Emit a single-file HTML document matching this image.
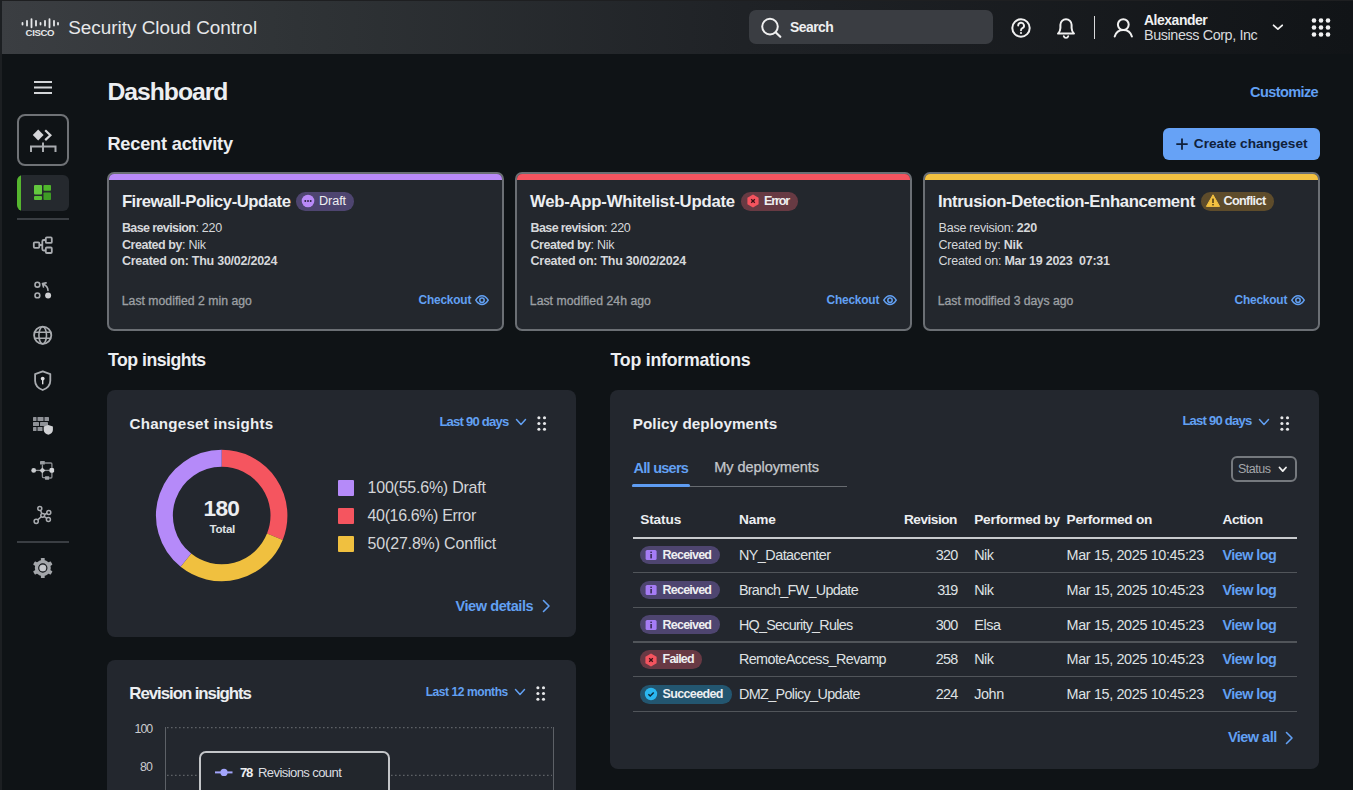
<!DOCTYPE html>
<html><head><meta charset="utf-8"><title>Security Cloud Control - Dashboard</title>
<style>
html,body{margin:0;padding:0;}
body{width:1353px;height:790px;overflow:hidden;background:#0f1316;position:relative;font-family:"Liberation Sans",sans-serif;}
.t{position:absolute;white-space:nowrap;line-height:1;}
svg{overflow:visible}
</style></head><body>
<div style="position:absolute;left:0;top:0;width:1353px;height:54px;background:linear-gradient(90deg,#3b3e42 0%,#2f3336 22%,#1f2226 55%,#111417 100%);border-top:1px solid #1e1f21;box-sizing:border-box"></div>
<div style="position:absolute;left:0;top:0;width:2px;height:790px;background:#1c1f22"></div>
<svg style="position:absolute;left:0;top:0" width="80" height="53"><rect x="21.6" y="22.0" width="1.8" height="3.4" rx="0.9" fill="#e6e7e9"/><rect x="26.1" y="20.0" width="1.8" height="6.4" rx="0.9" fill="#e6e7e9"/><rect x="30.6" y="18.2" width="1.8" height="10" rx="0.9" fill="#e6e7e9"/><rect x="35.1" y="20.0" width="1.8" height="6.4" rx="0.9" fill="#e6e7e9"/><rect x="39.6" y="22.0" width="1.8" height="3.4" rx="0.9" fill="#e6e7e9"/><rect x="44.1" y="20.0" width="1.8" height="6.4" rx="0.9" fill="#e6e7e9"/><rect x="48.6" y="18.2" width="1.8" height="10" rx="0.9" fill="#e6e7e9"/><rect x="53.1" y="20.0" width="1.8" height="6.4" rx="0.9" fill="#e6e7e9"/><rect x="57.1" y="22.0" width="1.8" height="3.4" rx="0.9" fill="#e6e7e9"/></svg>
<div class="t" style="left:25.60px;top:28.08px;font-size:9.59px;font-weight:700;color:#e6e7e9;letter-spacing:-0.350px;">CISCO</div>
<div class="t" style="left:68.20px;top:19.01px;font-size:18.90px;font-weight:400;color:#e6e7e9;letter-spacing:-0.005px;">Security Cloud Control</div>
<div style="position:absolute;left:749px;top:10px;width:244px;height:34px;border-radius:7px;background:#3a3d42"></div>
<svg style="position:absolute;left:758px;top:15px" width="26" height="26"><circle cx="12" cy="11.6" r="7.8" fill="none" stroke="#f0f0f0" stroke-width="2"/><line x1="17.6" y1="17.2" x2="22.3" y2="21.8" stroke="#f0f0f0" stroke-width="2.2" stroke-linecap="round"/></svg>
<div class="t" style="left:790.00px;top:21.19px;font-size:13.95px;font-weight:700;color:#eeeff1;letter-spacing:-0.540px;">Search</div>
<svg style="position:absolute;left:1008px;top:15px" width="26" height="26"><circle cx="13" cy="13" r="8.7" fill="none" stroke="#f0f0f0" stroke-width="2"/><path d="M10.2 10.6 a2.9 2.9 0 1 1 4.2 2.6 c-0.9 0.5 -1.4 1 -1.4 2" fill="none" stroke="#f0f0f0" stroke-width="1.9" stroke-linecap="round"/><circle cx="13" cy="18" r="1.1" fill="#f0f0f0"/></svg>
<svg style="position:absolute;left:1053px;top:14px" width="26" height="26"><path d="M5 19.6 h16 c-1.6 -1.6 -2.4 -3.3 -2.4 -5.6 v-3.2 a5.6 5.6 0 0 0 -11.2 0 v3.2 c0 2.3 -0.8 4 -2.4 5.6 z" fill="none" stroke="#f0f0f0" stroke-width="2" stroke-linejoin="round"/><path d="M10.8 22.2 a2.3 2.3 0 0 0 4.4 0" fill="none" stroke="#f0f0f0" stroke-width="1.9" stroke-linecap="round"/></svg>
<div style="position:absolute;left:1094px;top:16px;width:1.2px;height:23px;background:#d8d9db"></div>
<svg style="position:absolute;left:1110px;top:15px" width="26" height="26"><circle cx="13.3" cy="9.6" r="5.4" fill="none" stroke="#f0f0f0" stroke-width="2"/><path d="M4.7 21.5 c1.2 -4.3 4.4 -6.6 8.6 -6.6 s7.4 2.3 8.6 6.6" fill="none" stroke="#f0f0f0" stroke-width="2" stroke-linecap="round"/></svg>
<div class="t" style="left:1144.00px;top:14.19px;font-size:13.95px;font-weight:700;color:#f0f1f2;letter-spacing:-0.463px;">Alexander</div>
<div class="t" style="left:1144.00px;top:27.82px;font-size:14.39px;font-weight:400;color:#d8dadd;letter-spacing:-0.406px;">Business Corp, Inc</div>
<svg style="position:absolute;left:1270px;top:21px" width="16" height="14"><path d="M3.6 4.3 l4.3 3.8 l4.3 -3.8" fill="none" stroke="#f0f0f0" stroke-width="1.8" stroke-linecap="round" stroke-linejoin="round"/></svg>
<svg style="position:absolute;left:1308px;top:15px" width="26" height="26"><circle cx="6" cy="5.5" r="2.3" fill="#f2f2f3"/><circle cx="6" cy="12.5" r="2.3" fill="#f2f2f3"/><circle cx="6" cy="19.5" r="2.3" fill="#f2f2f3"/><circle cx="13" cy="5.5" r="2.3" fill="#f2f2f3"/><circle cx="13" cy="12.5" r="2.3" fill="#f2f2f3"/><circle cx="13" cy="19.5" r="2.3" fill="#f2f2f3"/><circle cx="20" cy="5.5" r="2.3" fill="#f2f2f3"/><circle cx="20" cy="12.5" r="2.3" fill="#f2f2f3"/><circle cx="20" cy="19.5" r="2.3" fill="#f2f2f3"/></svg>
<svg style="position:absolute;left:30px;top:78px" width="24" height="20"><rect x="4" y="3" width="18" height="2" fill="#d3d5d8"/><rect x="4" y="8.5" width="18" height="2" fill="#d3d5d8"/><rect x="4" y="14" width="18" height="2" fill="#d3d5d8"/></svg>
<div style="position:absolute;left:17px;top:114px;width:52px;height:52px;box-sizing:border-box;border:2px solid #6f7276;border-radius:8px"></div>
<svg style="position:absolute;left:0px;top:0px" width="80" height="200"><path d="M38.2 129.6 l5.4 5.4 l-5.4 5.4 l-5.4 -5.4 z" fill="#d5d6d9"/><path d="M46 131 l4.4 4.2 l-4.4 4.2" fill="none" stroke="#d5d6d9" stroke-width="2.2" stroke-linecap="square"/><path d="M31 152 v-5.5 h24.5 v5.5 M43 142.5 v9.5" fill="none" stroke="#a9acb0" stroke-width="2"/></svg>
<div style="position:absolute;left:17px;top:174.5px;width:52px;height:36px;border-radius:6px;background:#25292e;overflow:hidden"><div style="position:absolute;left:0;top:0;width:3.5px;height:36px;background:#55b52f"></div></div>
<svg style="position:absolute;left:34px;top:185px" width="18" height="16"><rect x="0" y="0" width="8" height="9.5" rx="1" fill="#63c73e"/><rect x="0" y="11" width="8" height="4" rx="1" fill="#58be35"/><rect x="9.5" y="0" width="7.5" height="5.8" rx="0.8" fill="#4fb52a"/><rect x="9.5" y="7.5" width="7.5" height="7.5" rx="0.8" fill="#3e9b25"/></svg>
<div style="position:absolute;left:17px;top:218px;width:52px;height:1.5px;background:#3a3e43"></div>
<svg style="position:absolute;left:30px;top:233px" width="26" height="24"><rect x="3.8" y="9.3" width="5.5" height="5.5" rx="1" fill="none" stroke="#a9acb0" stroke-width="1.8"/><rect x="15.8" y="4.4" width="6" height="5.5" rx="1" fill="none" stroke="#a9acb0" stroke-width="1.8"/><rect x="15.8" y="14.5" width="6" height="5.5" rx="1" fill="none" stroke="#a9acb0" stroke-width="1.8"/><path d="M9.3 12 h3 M15.8 7 h-2 a1.5 1.5 0 0 0 -1.5 1.5 v7.5 a1.5 1.5 0 0 0 1.5 1.5 h2" fill="none" stroke="#a9acb0" stroke-width="1.8"/></svg>
<svg style="position:absolute;left:30px;top:278px" width="26" height="24"><circle cx="7.4" cy="6.7" r="2.4" fill="none" stroke="#a9acb0" stroke-width="1.6"/><circle cx="7.4" cy="17.4" r="2.4" fill="none" stroke="#a9acb0" stroke-width="1.6"/><circle cx="18.1" cy="17.4" r="3" fill="#cfd0d3"/><path d="M18 12.5 c0 -3 -1.5 -5 -5 -6.5 M12.5 5.5 l1 3.5 M12.5 5.5 l3.6 -0.6" fill="none" stroke="#a9acb0" stroke-width="1.6" stroke-linecap="round"/></svg>
<svg style="position:absolute;left:30px;top:323px" width="26" height="26"><circle cx="12.7" cy="12.3" r="8.6" fill="none" stroke="#a9acb0" stroke-width="1.8"/><ellipse cx="12.7" cy="12.3" rx="3.8" ry="8.6" fill="none" stroke="#a9acb0" stroke-width="1.6"/><path d="M4.5 9.3 h16.4 M4.5 15.3 h16.4" stroke="#a9acb0" stroke-width="1.6"/></svg>
<svg style="position:absolute;left:30px;top:368px" width="26" height="26"><path d="M12.7 3.3 l7.6 2.8 v6.6 c0 4.6 -3.3 7.6 -7.6 9.3 c-4.3 -1.7 -7.6 -4.7 -7.6 -9.3 v-6.6 z" fill="none" stroke="#a9acb0" stroke-width="1.8" stroke-linejoin="round"/><circle cx="12.7" cy="10.6" r="1.9" fill="#e0e1e3"/><rect x="12" y="11" width="1.4" height="5.3" fill="#e0e1e3"/></svg>
<svg style="position:absolute;left:30px;top:413px" width="26" height="26"><g fill="#8f9297"><rect x="3" y="4" width="3.5" height="4" rx="0.6"/><rect x="7.5" y="4" width="6" height="4" rx="0.6"/><rect x="14.5" y="4" width="4.5" height="4" rx="0.6"/><rect x="3" y="9" width="6" height="4" rx="0.6"/><rect x="10" y="9" width="8" height="4" rx="0.6"/><rect x="3" y="14" width="3.5" height="4" rx="0.6"/><rect x="7.5" y="14" width="5" height="4" rx="0.6"/></g><path d="M18.3 12 l4.6 1.6 v3.3 c0 2.4 -1.9 3.8 -4.6 4.8 c-2.7 -1 -4.6 -2.4 -4.6 -4.8 v-3.3 z" fill="#d0d1d4"/></svg>
<svg style="position:absolute;left:28px;top:452px" width="30" height="30"><g fill="none" stroke="#8c8f93" stroke-width="1.3"><path d="M5.7 18.4 h18"/><path d="M14.4 12.5 v5.9 M16.9 11 h6 a1 1 0 0 1 1 1 v6.4 M14.4 18.4 v6 a1.2 1.2 0 0 0 1.2 1.2 h2 M21.3 26 h1.6 a1 1 0 0 0 1 -1 v-6.6"/></g><circle cx="5.7" cy="18.4" r="2.4" fill="#c9cbce"/><path d="M14.4 15.5 l2.9 2.9 l-2.9 2.9 l-2.9 -2.9 z" fill="#c9cbce"/><rect x="21.5" y="16.1" width="4.6" height="4.6" rx="1.4" fill="#d5d7da"/><rect x="12" y="9.1" width="4.9" height="3.5" rx="0.7" fill="#9a9da1"/><rect x="16.9" y="24.3" width="4.4" height="3.5" rx="0.7" fill="#a4a7ab"/></svg>
<svg style="position:absolute;left:30px;top:503px" width="26" height="26"><g fill="none" stroke="#a9acb0" stroke-width="1.5"><circle cx="12.7" cy="12.3" r="1.9"/><circle cx="9.8" cy="5.6" r="2"/><circle cx="18.8" cy="9.4" r="2"/><circle cx="18.4" cy="16.4" r="2"/><circle cx="6.2" cy="18.3" r="2.1"/><path d="M11.8 10.5 l-1.2 -3 M14.5 11.5 l2.5 -1.2 M14.3 13.5 l2.4 1.8 M11.2 13.7 l-3.5 3.2"/></g></svg>
<div style="position:absolute;left:17px;top:541px;width:52px;height:1.5px;background:#3a3e43"></div>
<svg style="position:absolute;left:28px;top:553px" width="30" height="30"><g fill="#a3a6aa"><circle cx="14.8" cy="15" r="8"/><rect x="12.9" y="4.9" width="3.8" height="5" rx="0.6" transform="rotate(0 14.8 15)"/><rect x="12.9" y="4.9" width="3.8" height="5" rx="0.6" transform="rotate(60 14.8 15)"/><rect x="12.9" y="4.9" width="3.8" height="5" rx="0.6" transform="rotate(120 14.8 15)"/><rect x="12.9" y="4.9" width="3.8" height="5" rx="0.6" transform="rotate(180 14.8 15)"/><rect x="12.9" y="4.9" width="3.8" height="5" rx="0.6" transform="rotate(240 14.8 15)"/><rect x="12.9" y="4.9" width="3.8" height="5" rx="0.6" transform="rotate(300 14.8 15)"/></g><circle cx="14.8" cy="15" r="4.1" fill="none" stroke="#101317" stroke-width="1.1"/><circle cx="14.8" cy="15" r="3.1" fill="#c6c8cc"/></svg>
<div class="t" style="left:107.40px;top:80.28px;font-size:24.71px;font-weight:700;color:#eceef1;letter-spacing:-1.000px;">Dashboard</div>
<div class="t" style="left:1250.00px;top:85.10px;font-size:14.53px;font-weight:700;color:#62a0f3;letter-spacing:-0.588px;">Customize</div>
<div class="t" style="left:107.40px;top:135.32px;font-size:18.17px;font-weight:700;color:#eceef1;letter-spacing:-0.179px;">Recent activity</div>
<div style="position:absolute;left:1163px;top:128px;width:157px;height:32px;border-radius:6px;background:#66a2f6"></div>
<svg style="position:absolute;left:1174px;top:136px" width="16" height="16"><path d="M8 2.5 v11.3 M2.3 8.1 h11.4" stroke="#10213b" stroke-width="1.8"/></svg>
<div class="t" style="left:1193.80px;top:137.23px;font-size:13.66px;font-weight:700;color:#10213b;letter-spacing:-0.007px;">Create changeset</div>
<div style="position:absolute;left:107px;top:172px;width:397px;height:159px;box-sizing:border-box;border:2px solid #6b6f74;border-radius:7px;background:#23272d;overflow:hidden"><div style="position:absolute;left:0;top:0;right:0;height:6px;background:#b98af8"></div></div>
<div class="t" style="left:121.90px;top:193.95px;font-size:16.72px;font-weight:700;color:#eceef1;letter-spacing:-0.481px;">Firewall-Policy-Update</div>
<div style="position:absolute;left:296px;top:192px;width:58.4px;height:18.5px;border-radius:9.25px;background:#4e4570"></div>
<svg style="position:absolute;left:299.5px;top:193px" width="16" height="16"><circle cx="8" cy="8" r="6.3" fill="#b98af8"/><circle cx="5.3" cy="8" r="0.95" fill="#2a2140"/><circle cx="8" cy="8" r="0.95" fill="#2a2140"/><circle cx="10.7" cy="8" r="0.95" fill="#2a2140"/></svg>
<div class="t" style="left:319.00px;top:194.80px;font-size:12.65px;font-weight:400;color:#eeeff1;letter-spacing:-0.075px;">Draft</div>
<div style="position:absolute;left:515px;top:172px;width:397px;height:159px;box-sizing:border-box;border:2px solid #6b6f74;border-radius:7px;background:#23272d;overflow:hidden"><div style="position:absolute;left:0;top:0;right:0;height:6px;background:#f4545f"></div></div>
<div class="t" style="left:529.90px;top:193.95px;font-size:16.72px;font-weight:700;color:#eceef1;letter-spacing:-0.222px;">Web-App-Whitelist-Update</div>
<div style="position:absolute;left:741px;top:192px;width:57px;height:18.5px;border-radius:9.25px;background:#673a43"></div>
<svg style="position:absolute;left:744.5px;top:193px" width="16" height="16"><path d="M8 1.6 l5.6 3.2 v6.4 l-5.6 3.2 l-5.6 -3.2 v-6.4 z" fill="#f4545f"/><path d="M6.2 6.2 l3.6 3.6 M9.8 6.2 l-3.6 3.6" stroke="#3a1015" stroke-width="1.3"/></svg>
<div class="t" style="left:764.00px;top:194.80px;font-size:12.65px;font-weight:700;color:#eeeff1;letter-spacing:-1.200px;">Error</div>
<div style="position:absolute;left:923px;top:172px;width:397px;height:159px;box-sizing:border-box;border:2px solid #6b6f74;border-radius:7px;background:#23272d;overflow:hidden"><div style="position:absolute;left:0;top:0;right:0;height:6px;background:#f3c141"></div></div>
<div class="t" style="left:937.90px;top:193.95px;font-size:16.72px;font-weight:700;color:#eceef1;letter-spacing:-0.363px;">Intrusion-Detection-Enhancement</div>
<div style="position:absolute;left:1201px;top:192px;width:72.6px;height:18.5px;border-radius:9.25px;background:#5e4c2b"></div>
<svg style="position:absolute;left:1204.5px;top:193px" width="16" height="16"><path d="M8 1.8 l6.6 11.6 h-13.2 z" fill="#f3c141" stroke="#f3c141" stroke-width="1" stroke-linejoin="round"/><rect x="7.3" y="5.6" width="1.4" height="4.4" fill="#3a2c10"/><rect x="7.3" y="11" width="1.4" height="1.4" fill="#3a2c10"/></svg>
<div class="t" style="left:1223.40px;top:194.80px;font-size:12.65px;font-weight:700;color:#eeeff1;letter-spacing:-0.614px;">Conflict</div>
<div class="t" style="left:121.90px;top:221.92px;font-size:12.50px;color:#d6d8db;letter-spacing:-0.25px"><span style="font-weight:700;letter-spacing:-0.6px">Base revision</span><span style="font-weight:400;letter-spacing:-0.25px">: 220</span></div>
<div class="t" style="left:121.90px;top:238.62px;font-size:12.50px;color:#d6d8db;letter-spacing:-0.25px"><span style="font-weight:700;letter-spacing:-0.45px">Created by</span><span style="font-weight:400;letter-spacing:-0.25px">: Nik</span></div>
<div class="t" style="left:121.90px;top:255.32px;font-size:12.50px;color:#d6d8db;letter-spacing:-0.25px"><span style="font-weight:700;letter-spacing:-0.25px">Created on: Thu 30/02/2024</span></div>
<div class="t" style="left:530.50px;top:221.92px;font-size:12.50px;color:#d6d8db;letter-spacing:-0.25px"><span style="font-weight:700;letter-spacing:-0.6px">Base revision</span><span style="font-weight:400;letter-spacing:-0.25px">: 220</span></div>
<div class="t" style="left:530.50px;top:238.62px;font-size:12.50px;color:#d6d8db;letter-spacing:-0.25px"><span style="font-weight:700;letter-spacing:-0.45px">Created by</span><span style="font-weight:400;letter-spacing:-0.25px">: Nik</span></div>
<div class="t" style="left:530.50px;top:255.32px;font-size:12.50px;color:#d6d8db;letter-spacing:-0.25px"><span style="font-weight:700;letter-spacing:-0.25px">Created on: Thu 30/02/2024</span></div>
<div class="t" style="left:938.60px;top:221.92px;font-size:12.50px;color:#d6d8db;letter-spacing:-0.25px"><span style="font-weight:400;letter-spacing:-0.25px">Base revision: </span><span style="font-weight:700;letter-spacing:-0.25px">220</span></div>
<div class="t" style="left:938.60px;top:238.62px;font-size:12.50px;color:#d6d8db;letter-spacing:-0.25px"><span style="font-weight:400;letter-spacing:-0.25px">Created by: </span><span style="font-weight:700;letter-spacing:-0.25px">Nik</span></div>
<div class="t" style="left:938.60px;top:255.32px;font-size:12.50px;color:#d6d8db;letter-spacing:-0.25px"><span style="font-weight:400;letter-spacing:-0.25px">Created on: </span><span style="font-weight:700;letter-spacing:-0.25px">Mar 19 2023&nbsp; 07:31</span></div>
<div class="t" style="left:121.80px;top:295.06px;font-size:12.21px;font-weight:400;color:#9da0a4;letter-spacing:0.023px;-webkit-text-stroke:0.3px #9da0a4;">Last modified 2 min ago</div>
<div class="t" style="left:418.50px;top:295.21px;font-size:11.92px;font-weight:700;color:#62a0f3;letter-spacing:-0.200px;">Checkout</div>
<svg style="position:absolute;left:474px;top:292px" width="16" height="16"><path d="M1.8 8.2 c1.8 -3 3.8 -4.4 6.2 -4.4 s4.4 1.4 6.2 4.4 c-1.8 3 -3.8 4.4 -6.2 4.4 s-4.4 -1.4 -6.2 -4.4z" fill="none" stroke="#62a0f3" stroke-width="1.5"/><circle cx="8" cy="8.2" r="2.2" fill="none" stroke="#62a0f3" stroke-width="1.5"/></svg>
<div class="t" style="left:529.80px;top:295.06px;font-size:12.21px;font-weight:400;color:#9da0a4;letter-spacing:0.050px;-webkit-text-stroke:0.3px #9da0a4;">Last modified 24h ago</div>
<div class="t" style="left:826.50px;top:295.21px;font-size:11.92px;font-weight:700;color:#62a0f3;letter-spacing:-0.200px;">Checkout</div>
<svg style="position:absolute;left:882px;top:292px" width="16" height="16"><path d="M1.8 8.2 c1.8 -3 3.8 -4.4 6.2 -4.4 s4.4 1.4 6.2 4.4 c-1.8 3 -3.8 4.4 -6.2 4.4 s-4.4 -1.4 -6.2 -4.4z" fill="none" stroke="#62a0f3" stroke-width="1.5"/><circle cx="8" cy="8.2" r="2.2" fill="none" stroke="#62a0f3" stroke-width="1.5"/></svg>
<div class="t" style="left:937.80px;top:295.06px;font-size:12.21px;font-weight:400;color:#9da0a4;letter-spacing:-0.009px;-webkit-text-stroke:0.3px #9da0a4;">Last modified 3 days ago</div>
<div class="t" style="left:1234.50px;top:295.21px;font-size:11.92px;font-weight:700;color:#62a0f3;letter-spacing:-0.200px;">Checkout</div>
<svg style="position:absolute;left:1290px;top:292px" width="16" height="16"><path d="M1.8 8.2 c1.8 -3 3.8 -4.4 6.2 -4.4 s4.4 1.4 6.2 4.4 c-1.8 3 -3.8 4.4 -6.2 4.4 s-4.4 -1.4 -6.2 -4.4z" fill="none" stroke="#62a0f3" stroke-width="1.5"/><circle cx="8" cy="8.2" r="2.2" fill="none" stroke="#62a0f3" stroke-width="1.5"/></svg>
<div class="t" style="left:108.10px;top:352.39px;font-size:17.73px;font-weight:700;color:#eceef1;letter-spacing:-0.536px;">Top insights</div>
<div class="t" style="left:610.50px;top:352.39px;font-size:17.73px;font-weight:700;color:#eceef1;letter-spacing:-0.213px;">Top informations</div>
<div style="position:absolute;left:107px;top:390px;width:469px;height:247px;border-radius:8px;background:#23272e"></div>
<div class="t" style="left:129.60px;top:416.00px;font-size:15.12px;font-weight:700;color:#eceef1;letter-spacing:0.241px;">Changeset insights</div>
<div class="t" style="left:439.40px;top:414.93px;font-size:13.08px;font-weight:700;color:#62a0f3;letter-spacing:-0.782px;">Last 90 days</div>
<svg style="position:absolute;left:515px;top:417.5px" width="12" height="8"><path d="M1.5 1.5 l4.5 5 l4.5 -5" fill="none" stroke="#62a0f3" stroke-width="1.5" stroke-linecap="round" stroke-linejoin="round"/></svg>
<svg style="position:absolute;left:537px;top:416px" width="12" height="18"><circle cx="1.9" cy="1.8" r="1.55" fill="#e6e7e9"/><circle cx="7.5" cy="1.8" r="1.55" fill="#e6e7e9"/><circle cx="1.9" cy="7.5" r="1.55" fill="#e6e7e9"/><circle cx="7.5" cy="7.5" r="1.55" fill="#e6e7e9"/><circle cx="1.9" cy="13.200000000000001" r="1.55" fill="#e6e7e9"/><circle cx="7.5" cy="13.200000000000001" r="1.55" fill="#e6e7e9"/></svg>
<svg style="position:absolute;left:0;top:0" width="600" height="700"><path d="M221.70 458.25 A57.25 57.25 0 0 1 274.86 536.76" fill="none" stroke="#f5555f" stroke-width="16.90"/><path d="M274.86 536.76 A57.25 57.25 0 0 1 185.90 560.18" fill="none" stroke="#f0c03f" stroke-width="16.90"/><path d="M185.90 560.18 A57.25 57.25 0 0 1 221.70 458.25" fill="none" stroke="#b58af9" stroke-width="16.90"/></svg>
<div class="t" style="left:203.50px;top:496.81px;font-size:22.67px;font-weight:700;color:#eceef1;letter-spacing:-0.700px;">180</div>
<div class="t" style="left:209.60px;top:523.16px;font-size:11.63px;font-weight:700;color:#dfe1e3;letter-spacing:-0.300px;">Total</div>
<div style="position:absolute;left:338px;top:480px;width:16px;height:15.5px;background:#b58af9;border-radius:1px"></div>
<div class="t" style="left:367.60px;top:480.37px;font-size:15.99px;font-weight:400;color:#d3d5d8;letter-spacing:-0.227px;">100(55.6%) Draft</div>
<div style="position:absolute;left:338px;top:508px;width:16px;height:15.5px;background:#f5555f;border-radius:1px"></div>
<div class="t" style="left:367.60px;top:508.37px;font-size:15.99px;font-weight:400;color:#d3d5d8;letter-spacing:-0.364px;">40(16.6%) Error</div>
<div style="position:absolute;left:338px;top:536px;width:16px;height:15.5px;background:#f0c03f;border-radius:1px"></div>
<div class="t" style="left:367.60px;top:536.37px;font-size:15.99px;font-weight:400;color:#d3d5d8;letter-spacing:-0.171px;">50(27.8%) Conflict</div>
<div class="t" style="left:455.50px;top:599.20px;font-size:14.53px;font-weight:700;color:#62a0f3;letter-spacing:-0.427px;">View details</div>
<svg style="position:absolute;left:542px;top:599px" width="10" height="14"><path d="M1.5 1.5 l5.5 5.5 l-5.5 5.5" fill="none" stroke="#62a0f3" stroke-width="1.6" stroke-linecap="round" stroke-linejoin="round"/></svg>
<div style="position:absolute;left:107px;top:660px;width:469px;height:160px;border-radius:8px;background:#23272e"></div>
<div class="t" style="left:129.30px;top:685.53px;font-size:16.86px;font-weight:700;color:#eceef1;letter-spacing:-1.056px;">Revision insights</div>
<div class="t" style="left:425.70px;top:685.99px;font-size:12.06px;font-weight:700;color:#62a0f3;letter-spacing:-0.446px;">Last 12 months</div>
<svg style="position:absolute;left:514px;top:688px" width="12" height="8"><path d="M1.5 1.5 l4.5 5 l4.5 -5" fill="none" stroke="#62a0f3" stroke-width="1.5" stroke-linecap="round" stroke-linejoin="round"/></svg>
<svg style="position:absolute;left:535.6px;top:686px" width="12" height="18"><circle cx="1.9" cy="1.8" r="1.55" fill="#e6e7e9"/><circle cx="7.5" cy="1.8" r="1.55" fill="#e6e7e9"/><circle cx="1.9" cy="7.5" r="1.55" fill="#e6e7e9"/><circle cx="7.5" cy="7.5" r="1.55" fill="#e6e7e9"/><circle cx="1.9" cy="13.200000000000001" r="1.55" fill="#e6e7e9"/><circle cx="7.5" cy="13.200000000000001" r="1.55" fill="#e6e7e9"/></svg>
<div class="t" style="left:134.60px;top:723.04px;font-size:12.35px;font-weight:400;color:#c9cbce;letter-spacing:-1.050px;">100</div>
<div class="t" style="left:140.00px;top:761.14px;font-size:12.35px;font-weight:400;color:#c9cbce;letter-spacing:-0.800px;">80</div>
<div style="position:absolute;left:165px;top:727px;width:1.2px;height:70px;background:#5d6167"></div>
<div style="position:absolute;left:552.5px;top:727px;width:1.2px;height:70px;background:#5d6167"></div>
<svg style="position:absolute;left:0;top:0" width="600" height="790"><path d="M167 727.6 H552 M167 775.4 H552" stroke="#5d6166" stroke-width="1.1" stroke-dasharray="1.6 2.4"/></svg>
<div style="position:absolute;left:198.8px;top:750.8px;width:191px;height:60px;box-sizing:border-box;border:2px solid #c3c5c8;border-radius:7px;background:#22262c"></div>
<svg style="position:absolute;left:213px;top:766px" width="22" height="13"><path d="M2 6.4 h17.5" stroke="#a2a4fb" stroke-width="2"/><circle cx="11" cy="6.4" r="3.6" fill="#a2a4fb"/></svg>
<div class="t" style="left:240.00px;top:765.73px;font-size:13.08px;font-weight:700;color:#eceef1;letter-spacing:-1.200px;">78</div>
<div class="t" style="left:258.00px;top:765.73px;font-size:13.08px;font-weight:400;color:#dcdee0;letter-spacing:-0.607px;">Revisions count</div>
<div style="position:absolute;left:610px;top:390px;width:709px;height:379px;border-radius:8px;background:#23272e"></div>
<div class="t" style="left:632.70px;top:416.08px;font-size:15.26px;font-weight:700;color:#eceef1;letter-spacing:0.076px;">Policy deployments</div>
<div class="t" style="left:1182.40px;top:414.43px;font-size:13.08px;font-weight:700;color:#62a0f3;letter-spacing:-0.782px;">Last 90 days</div>
<svg style="position:absolute;left:1258px;top:417.5px" width="12" height="8"><path d="M1.5 1.5 l4.5 5 l4.5 -5" fill="none" stroke="#62a0f3" stroke-width="1.5" stroke-linecap="round" stroke-linejoin="round"/></svg>
<svg style="position:absolute;left:1280px;top:416px" width="12" height="18"><circle cx="1.9" cy="1.8" r="1.55" fill="#e6e7e9"/><circle cx="7.5" cy="1.8" r="1.55" fill="#e6e7e9"/><circle cx="1.9" cy="7.5" r="1.55" fill="#e6e7e9"/><circle cx="7.5" cy="7.5" r="1.55" fill="#e6e7e9"/><circle cx="1.9" cy="13.200000000000001" r="1.55" fill="#e6e7e9"/><circle cx="7.5" cy="13.200000000000001" r="1.55" fill="#e6e7e9"/></svg>
<div class="t" style="left:633.60px;top:460.90px;font-size:14.53px;font-weight:700;color:#62a0f3;letter-spacing:-0.750px;">All users</div>
<div class="t" style="left:714.30px;top:460.30px;font-size:14.53px;font-weight:400;color:#c5c8cc;letter-spacing:-0.069px;-webkit-text-stroke:0.25px #c5c8cc;">My deployments</div>
<div style="position:absolute;left:632px;top:486px;width:215px;height:1px;background:#676b70"></div>
<div style="position:absolute;left:632px;top:484px;width:58px;height:3px;border-radius:1.5px;background:#5e9cf2"></div>
<div style="position:absolute;left:1230.5px;top:455.5px;width:66px;height:26px;box-sizing:border-box;border:2px solid #75797e;border-radius:6px"></div>
<div class="t" style="left:1238.00px;top:463.02px;font-size:12.50px;font-weight:400;color:#a3a6aa;letter-spacing:-0.480px;">Status</div>
<svg style="position:absolute;left:1278px;top:466px" width="9.5" height="6.6"><path d="M1.5 1.5 l3.25 3.5999999999999996 l3.25 -3.5999999999999996" fill="none" stroke="#f0f0f0" stroke-width="1.8" stroke-linecap="round" stroke-linejoin="round"/></svg>
<div class="t" style="left:640.20px;top:513.43px;font-size:13.66px;font-weight:700;color:#eceef1;letter-spacing:-0.140px;">Status</div>
<div class="t" style="left:738.90px;top:513.43px;font-size:13.66px;font-weight:700;color:#eceef1;letter-spacing:-0.100px;">Name</div>
<div class="t" style="left:903.90px;top:513.43px;font-size:13.66px;font-weight:700;color:#eceef1;letter-spacing:-0.486px;">Revision</div>
<div class="t" style="left:974.20px;top:513.43px;font-size:13.66px;font-weight:700;color:#eceef1;letter-spacing:-0.191px;">Performed by</div>
<div class="t" style="left:1066.60px;top:513.43px;font-size:13.66px;font-weight:700;color:#eceef1;letter-spacing:-0.273px;">Performed on</div>
<div class="t" style="left:1222.50px;top:513.43px;font-size:13.66px;font-weight:700;color:#eceef1;letter-spacing:-0.380px;">Action</div>
<div style="position:absolute;left:632.5px;top:536.5px;width:664px;height:2px;background:#c9cbce"></div>
<div style="position:absolute;left:640px;top:545.80px;width:80px;height:18.6px;border-radius:9.3px;background:#4e4570"></div>
<svg style="position:absolute;left:643px;top:547.10px" width="16" height="16"><rect x="2.6" y="3" width="11" height="10" rx="1.6" fill="#a67cf5"/><rect x="7.4" y="4.6" width="1.4" height="1.4" fill="#2a2140"/><rect x="7.4" y="7" width="1.4" height="4.4" fill="#2a2140"/></svg>
<div class="t" style="left:662.60px;top:549.02px;font-size:12.50px;font-weight:700;color:#eeeff1;letter-spacing:-0.786px;">Received</div>
<div class="t" style="left:738.90px;top:548.02px;font-size:14.39px;font-weight:400;color:#dfe1e3;letter-spacing:-0.517px;">NY_Datacenter</div>
<div class="t" style="left:935.70px;top:548.02px;font-size:14.39px;font-weight:400;color:#dfe1e3;letter-spacing:-0.750px;">320</div>
<div class="t" style="left:974.20px;top:548.02px;font-size:14.39px;font-weight:400;color:#dfe1e3;letter-spacing:-0.450px;">Nik</div>
<div class="t" style="left:1066.60px;top:548.02px;font-size:14.39px;font-weight:400;color:#dfe1e3;letter-spacing:-0.355px;">Mar 15, 2025 10:45:23</div>
<div class="t" style="left:1222.50px;top:548.02px;font-size:14.39px;font-weight:700;color:#62a0f3;letter-spacing:-0.543px;">View log</div>
<div style="position:absolute;left:632.5px;top:571.80px;width:664px;height:1.2px;background:#51555a"></div>
<div style="position:absolute;left:640px;top:580.60px;width:80px;height:18.6px;border-radius:9.3px;background:#4e4570"></div>
<svg style="position:absolute;left:643px;top:581.90px" width="16" height="16"><rect x="2.6" y="3" width="11" height="10" rx="1.6" fill="#a67cf5"/><rect x="7.4" y="4.6" width="1.4" height="1.4" fill="#2a2140"/><rect x="7.4" y="7" width="1.4" height="4.4" fill="#2a2140"/></svg>
<div class="t" style="left:662.60px;top:583.82px;font-size:12.50px;font-weight:700;color:#eeeff1;letter-spacing:-0.786px;">Received</div>
<div class="t" style="left:738.90px;top:582.82px;font-size:14.39px;font-weight:400;color:#dfe1e3;letter-spacing:-0.700px;">Branch_FW_Update</div>
<div class="t" style="left:937.20px;top:582.82px;font-size:14.39px;font-weight:400;color:#dfe1e3;letter-spacing:-1.500px;">319</div>
<div class="t" style="left:974.20px;top:582.82px;font-size:14.39px;font-weight:400;color:#dfe1e3;letter-spacing:-0.450px;">Nik</div>
<div class="t" style="left:1066.60px;top:582.82px;font-size:14.39px;font-weight:400;color:#dfe1e3;letter-spacing:-0.355px;">Mar 15, 2025 10:45:23</div>
<div class="t" style="left:1222.50px;top:582.82px;font-size:14.39px;font-weight:700;color:#62a0f3;letter-spacing:-0.543px;">View log</div>
<div style="position:absolute;left:632.5px;top:606.60px;width:664px;height:1.2px;background:#51555a"></div>
<div style="position:absolute;left:640px;top:615.40px;width:80px;height:18.6px;border-radius:9.3px;background:#4e4570"></div>
<svg style="position:absolute;left:643px;top:616.70px" width="16" height="16"><rect x="2.6" y="3" width="11" height="10" rx="1.6" fill="#a67cf5"/><rect x="7.4" y="4.6" width="1.4" height="1.4" fill="#2a2140"/><rect x="7.4" y="7" width="1.4" height="4.4" fill="#2a2140"/></svg>
<div class="t" style="left:662.60px;top:618.62px;font-size:12.50px;font-weight:700;color:#eeeff1;letter-spacing:-0.786px;">Received</div>
<div class="t" style="left:738.90px;top:617.62px;font-size:14.39px;font-weight:400;color:#dfe1e3;letter-spacing:-0.750px;">HQ_Security_Rules</div>
<div class="t" style="left:935.70px;top:617.62px;font-size:14.39px;font-weight:400;color:#dfe1e3;letter-spacing:-0.750px;">300</div>
<div class="t" style="left:974.20px;top:617.62px;font-size:14.39px;font-weight:400;color:#dfe1e3;letter-spacing:-0.367px;">Elsa</div>
<div class="t" style="left:1066.60px;top:617.62px;font-size:14.39px;font-weight:400;color:#dfe1e3;letter-spacing:-0.355px;">Mar 15, 2025 10:45:23</div>
<div class="t" style="left:1222.50px;top:617.62px;font-size:14.39px;font-weight:700;color:#62a0f3;letter-spacing:-0.543px;">View log</div>
<div style="position:absolute;left:632.5px;top:641.40px;width:664px;height:1.2px;background:#51555a"></div>
<div style="position:absolute;left:640px;top:650.20px;width:62px;height:18.6px;border-radius:9.3px;background:#683944"></div>
<svg style="position:absolute;left:643px;top:651.50px" width="16" height="16"><path d="M8 1.6 l5.6 3.2 v6.4 l-5.6 3.2 l-5.6 -3.2 v-6.4 z" fill="#f4545f"/><path d="M6.2 6.2 l3.6 3.6 M9.8 6.2 l-3.6 3.6" stroke="#3a1015" stroke-width="1.3"/></svg>
<div class="t" style="left:662.60px;top:653.42px;font-size:12.50px;font-weight:700;color:#eeeff1;letter-spacing:-0.840px;">Failed</div>
<div class="t" style="left:738.90px;top:652.42px;font-size:14.39px;font-weight:400;color:#dfe1e3;letter-spacing:-0.583px;">RemoteAccess_Revamp</div>
<div class="t" style="left:935.70px;top:652.42px;font-size:14.39px;font-weight:400;color:#dfe1e3;letter-spacing:-0.750px;">258</div>
<div class="t" style="left:974.20px;top:652.42px;font-size:14.39px;font-weight:400;color:#dfe1e3;letter-spacing:-0.450px;">Nik</div>
<div class="t" style="left:1066.60px;top:652.42px;font-size:14.39px;font-weight:400;color:#dfe1e3;letter-spacing:-0.355px;">Mar 15, 2025 10:45:23</div>
<div class="t" style="left:1222.50px;top:652.42px;font-size:14.39px;font-weight:700;color:#62a0f3;letter-spacing:-0.543px;">View log</div>
<div style="position:absolute;left:632.5px;top:676.20px;width:664px;height:1.2px;background:#51555a"></div>
<div style="position:absolute;left:640px;top:685.00px;width:91.5px;height:18.6px;border-radius:9.3px;background:#235670"></div>
<svg style="position:absolute;left:643px;top:686.30px" width="16" height="16"><circle cx="8" cy="8" r="6.2" fill="#2bb7f0"/><path d="M5.4 8.2 l1.8 1.8 l3.5 -3.6" fill="none" stroke="#0c2838" stroke-width="1.5"/></svg>
<div class="t" style="left:662.60px;top:688.22px;font-size:12.50px;font-weight:700;color:#eeeff1;letter-spacing:-0.650px;">Succeeded</div>
<div class="t" style="left:738.90px;top:687.22px;font-size:14.39px;font-weight:400;color:#dfe1e3;letter-spacing:-0.631px;">DMZ_Policy_Update</div>
<div class="t" style="left:935.70px;top:687.22px;font-size:14.39px;font-weight:400;color:#dfe1e3;letter-spacing:-0.750px;">224</div>
<div class="t" style="left:974.20px;top:687.22px;font-size:14.39px;font-weight:400;color:#dfe1e3;letter-spacing:-0.400px;">John</div>
<div class="t" style="left:1066.60px;top:687.22px;font-size:14.39px;font-weight:400;color:#dfe1e3;letter-spacing:-0.355px;">Mar 15, 2025 10:45:23</div>
<div class="t" style="left:1222.50px;top:687.22px;font-size:14.39px;font-weight:700;color:#62a0f3;letter-spacing:-0.543px;">View log</div>
<div style="position:absolute;left:632.5px;top:711.00px;width:664px;height:1.2px;background:#51555a"></div>
<div class="t" style="left:1227.90px;top:729.90px;font-size:14.53px;font-weight:700;color:#62a0f3;letter-spacing:-0.529px;">View all</div>
<svg style="position:absolute;left:1285px;top:730.6px" width="10" height="14"><path d="M1.5 1.5 l5.5 5.5 l-5.5 5.5" fill="none" stroke="#62a0f3" stroke-width="1.6" stroke-linecap="round" stroke-linejoin="round"/></svg>
</body></html>
